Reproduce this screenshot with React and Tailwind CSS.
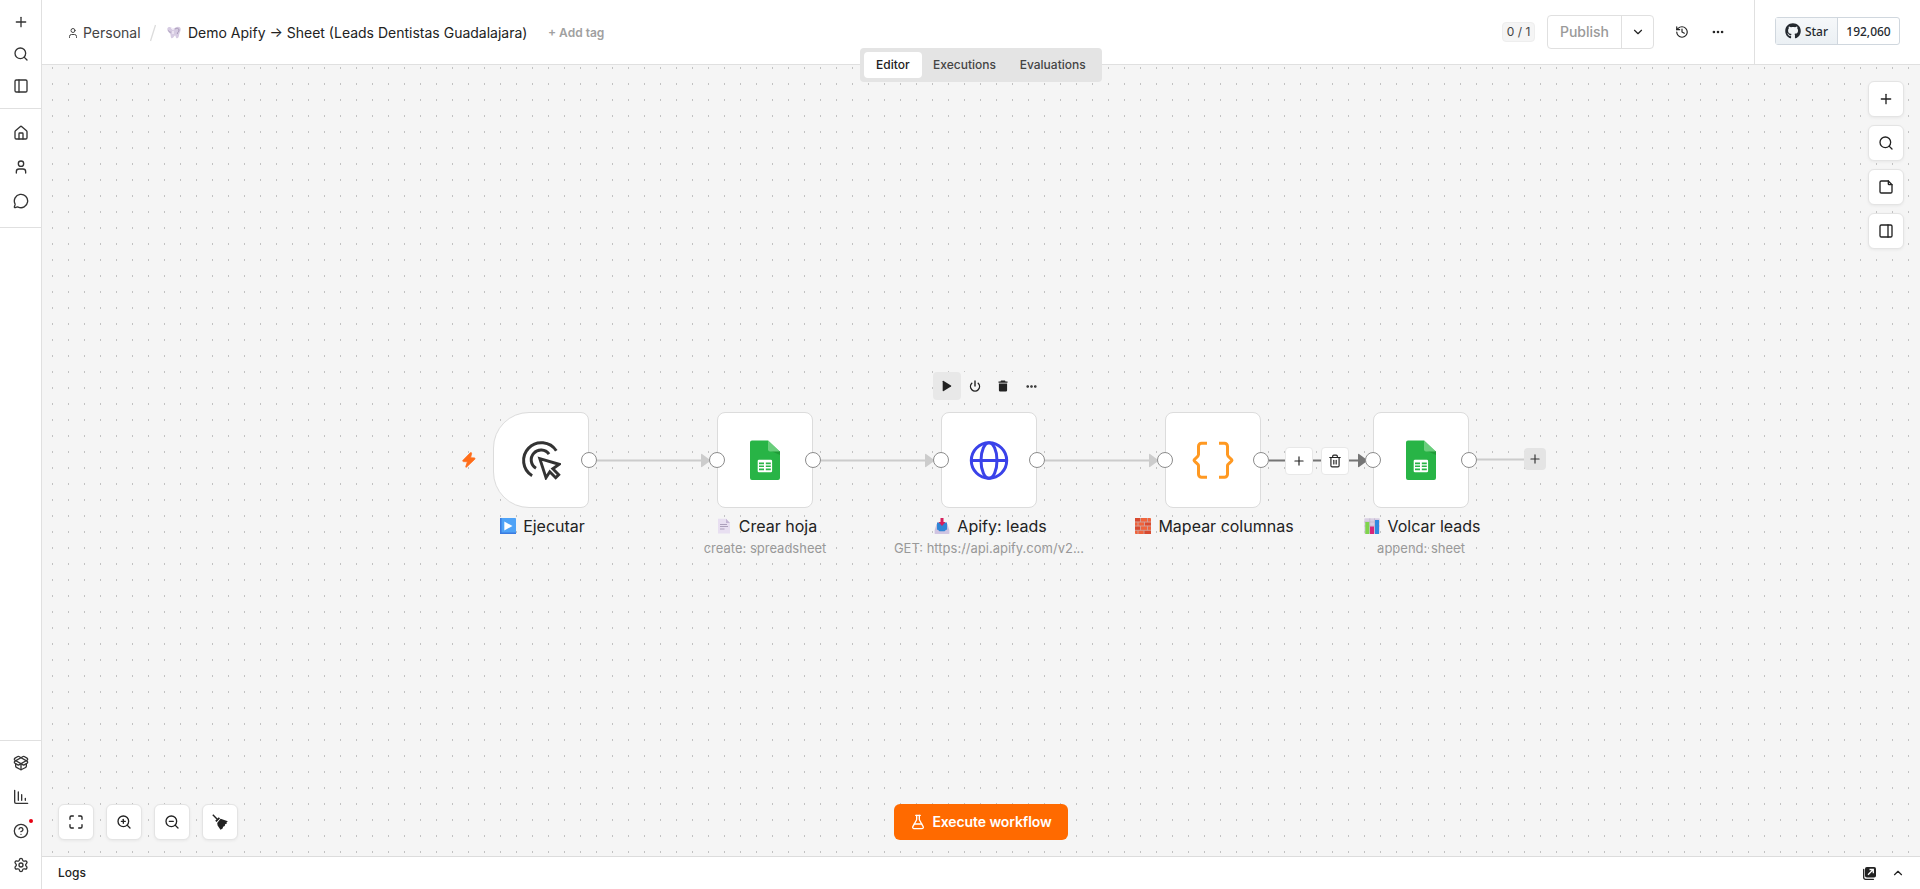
import React from "react";
import {
  Plus, Search, PanelLeft, PanelRight, House, User, MessageCircle, PackageOpen,
  CircleQuestionMark, Settings, History, ChevronDown, ChevronUp, Ellipsis, Maximize,
  ZoomIn, ZoomOut, Trash2, Power, FlaskConical,
} from "lucide-react";
import { FaGithub } from "react-icons/fa";

/* ---------- Icons ---------- */

function InsightsIcon() {
  return (
    <svg width="16" height="16" viewBox="0 0 24 24" fill="none" stroke="currentColor" strokeWidth="2" strokeLinecap="round" strokeLinejoin="round">
      <path d="M2.500 2v17.500a2 2 0 0 0 2 2H22M8 17V4.500M13 17V8.500M18.500 17v-3" />
    </svg>
  );
}

function NoteIcon() {
  return (
    <svg width="16" height="16" viewBox="0 0 24 24" fill="none" stroke="currentColor" strokeWidth="2" strokeLinecap="round" strokeLinejoin="round">
      <path d="M15.500 3H5a2 2 0 0 0-2 2v14a2 2 0 0 0 2 2h14a2 2 0 0 0 2-2V8.500Z" />
      <path d="M15.500 3v4.500a1 1 0 0 0 1 1H21" />
    </svg>
  );
}

function BroomIcon() {
  return (
    <svg width="16" height="16" viewBox="0 0 16 16" fill="#222">
      <path d="M.3 1.300 1.300.3l4.200 4.200 1.300-1.300 1.200 1.200L4.500 8 3.200 6.800l1.300-1.300Z" />
      <path d="M8.600 4.700 15.800 7.300 14.500 8.600l.3 1.200-1.500.3-.6 2-1.600.7-.5 1.700-2.100 1.300-2.900-4.200-.4-2.500Z" />
    </svg>
  );
}

function PopOutIcon() {
  return (
    <svg width="13" height="13" viewBox="0 0 13 13" fill="none">
      <rect x="2" y="0" width="11" height="10.500" rx="1.800" fill="#222" />
      <path d="M.7 2.500V10.500a1.800 1.800 0 0 0 1.800 1.800H10.500" stroke="#222" strokeWidth="1.300" strokeLinecap="round" />
      <path d="M5 7.800 10 2.800M6.500 2.500h3.800v3.800" stroke="#fff" strokeWidth="1.300" />
    </svg>
  );
}

function PointerIcon() {
  return (
    <svg width="40" height="40" viewBox="0 0 40 40" fill="none" stroke="#333" strokeWidth="3">
      <path d="M35.300 10.800A17.800 17.800 0 1 0 11.100 35.700" />
      <path d="M28 14.200A9.800 9.800 0 1 0 15 28.300" />
      <path d="M18.800 18.700 38 24.300 31.800 28.800 37.700 34.700 34.700 37.700 28.800 31.800 25 37.700Z" strokeWidth="2.900" />
    </svg>
  );
}

function SheetsIcon() {
  return (
    <svg width="30" height="40" viewBox="0 0 30 40">
      <path d="M2 .5H18L30 12V38a2 2 0 0 1-2 2H2a2 2 0 0 1-2-2V2.500a2 2 0 0 1 2-2Z" fill="#28b446" />
      <path d="M20 10.500 30 15V11Z" fill="#219b38" />
      <path d="M18 .5 30 11.500H20a2 2 0 0 1-2-2Z" fill="#6ace7c" />
      <rect x="7.700" y="19.800" width="14.400" height="12.500" rx="1.300" fill="#fff" />
      <path d="M9 22.500h5v1.700H9zM15.800 22.500h5v1.700h-5zM9 25.500h5v1.500H9zM15.800 25.500h5v1.500h-5zM9 28.500h5v1.700H9zM15.800 28.500h5v1.700h-5z" fill="#28b446" />
    </svg>
  );
}

function GlobeIcon() {
  return (
    <svg width="40" height="40" viewBox="0 0 40 40" fill="none" stroke="#3a42e9" strokeWidth="3">
      <circle cx="20" cy="20.500" r="17.700" />
      <ellipse cx="20" cy="20.500" rx="8" ry="17.700" />
      <path d="M2.200 20.500h35.600" />
    </svg>
  );
}

function BracesIcon() {
  return (
    <svg width="42" height="38" viewBox="0 0 42 38" fill="none" stroke="#ff9922" strokeWidth="3">
      <path d="M15 2.300H9.500a3 3 0 0 0-3 3v8.500c0 2.200-4.500 4-4.500 5.500s4.500 3.300 4.500 5.500V33.300a3 3 0 0 0 3 3H15" />
      <path d="M27 2.300h5.500a3 3 0 0 1 3 3v8.500c0 2.200 4.500 4 4.500 5.500s-4.500 3.300-4.500 5.500V33.300a3 3 0 0 1-3 3H27" />
    </svg>
  );
}

/* ---------- Label pictograms, 16-unit grid ---------- */

function PlayTile() {
  return (
    <svg width="16" height="16" viewBox="0 0 16 16">
      <rect width="16" height="16" rx=".8" fill="#4fa3f7" />
      <path d="M0 0h1.500v14.500h14.500v1.500H0z" fill="#3a7be0" />
      <path d="M4.300 3.500v9L12.500 8Z" fill="#fff" />
    </svg>
  );
}

function PageTile() {
  return (
    <svg width="16" height="16" viewBox="0 0 16 16">
      <path d="M2 .8h8L14 5v10.500H2Z" fill="#e8dff1" />
      <path d="M10 .8 14 5h-4Z" fill="#c4b6d4" />
      <path d="M4 6.500h7M4 8.500h8M4 11h4.500" stroke="#a598b4" strokeWidth=".9" />
    </svg>
  );
}

function InboxTile() {
  return (
    <svg width="16" height="16" viewBox="0 0 16 16">
      <path d="M2.500 6h11l1.700 6v3.800H.8V12Z" fill="#c9bfdc" />
      <path d="M3 4.500h10v8l-2.500 1h-5L3 12.500Z" fill="#2f86d6" />
      <path d="M.8 11.800H4l1.500 1.700h5l1.500-1.700h3.200v4H.8Z" fill="#cfc4e2" />
      <path d="M6.500 0h3v4h2L8 8 4.500 4h2Z" fill="#d51f5c" />
    </svg>
  );
}

function BrickTile() {
  return (
    <svg width="16" height="16" viewBox="0 0 16 16">
      <rect width="16" height="16" rx=".8" fill="#f0643c" />
      <path d="M0 0h5v3.500H0zM10 4.500h6v3H10zM0 8.500h5V12H0zM9 12.700h7V16H9z" fill="#d84a30" />
      <path d="M0 4h16M0 8h16M0 12.300h16M5.500 0v4M12.500 0v4M3 4v4M9.500 4v4M5.500 8v4.300M12.500 8v4.300M3 12.300V16M9 12.300V16" stroke="#c9a9a8" strokeWidth=".8" />
    </svg>
  );
}

function ChartTile() {
  return (
    <svg width="16" height="16" viewBox="0 0 16 16">
      <rect x=".3" y=".3" width="15.400" height="15.400" rx=".6" fill="#d9cfe3" />
      <path d="M.3 4h15.400M.3 8h15.400M5.800.3v15.400M10.500.3v15.400" stroke="#b8aec6" strokeWidth=".6" />
      <rect x="1.300" y="4" width="4" height="12" fill="#7fd44c" />
      <rect x="6" y="8.500" width="4" height="7.500" fill="#d8267a" />
      <rect x="11" y="2" width="4" height="14" fill="#2f8ae0" />
    </svg>
  );
}

function ToothTile() {
  return (
    <svg width="14" height="14" viewBox="0 0 14 14">
      <path d="M.3 3C.5.800 3 .6 4 1.500l2.500 1.200L9 1.200c1.500-1 4.700-.7 4.700 1.800 0 2.500-1 3-1.400 5-.3 2-.8 4.300-2.300 4.300S9 9.500 8 9.500 6.500 12.300 5 12.300 3.900 9.500 3.300 8 .1 5.500.3 3Z" fill="#d6cbe2" />
      <path d="M1.500 4.500c.3 1.500 2 2 2.700 1.500M8 3C9.500 2 12 2 12 4S10.300 6 10.300 8" fill="none" stroke="#a99bb9" strokeWidth="1" />
      <path d="M4.300 1.700 6.500 3.700M6 5v3" stroke="#f7f2fb" strokeWidth="1.200" />
    </svg>
  );
}

/* ---------- Layout pieces ---------- */

function SideItem({ children, tall, badge }) {
  return (
    <div className={tall ? "relative flex h-[34px] w-full items-center justify-center" : "relative flex h-8 w-full items-center justify-center"}>
      {children}
      {badge && <span className="absolute top-[5px] left-[29px] size-1 rounded-full bg-[#e60012]" />}
    </div>
  );
}

function Sidebar() {
  return (
    <aside className="flex w-[42px] shrink-0 flex-col border-r border-[#e0e0e0] bg-white text-[#333]">
      <div className="flex h-[109px] flex-col border-b border-[#e0e0e0] pt-1.5">
        <SideItem><Plus size={16} /></SideItem>
        <SideItem><Search size={16} /></SideItem>
        <SideItem><PanelLeft size={16} /></SideItem>
      </div>
      <div className="flex h-[119px] flex-col border-b border-[#e0e0e0] pt-[7px]">
        <SideItem tall><House size={16} /></SideItem>
        <SideItem tall><User size={16} /></SideItem>
        <SideItem tall><MessageCircle size={16} /></SideItem>
      </div>
      <div className="mt-auto flex h-[149px] flex-col border-t border-[#e0e0e0] pt-[5px]">
        <SideItem tall><PackageOpen size={16} /></SideItem>
        <SideItem tall><InsightsIcon /></SideItem>
        <SideItem tall badge><CircleQuestionMark size={16} /></SideItem>
        <SideItem tall><Settings size={16} /></SideItem>
      </div>
    </aside>
  );
}

function Header() {
  return (
    <header className="flex h-[65px] shrink-0 items-center border-b border-[#e0e0e0] bg-white pl-[25px]">
      <div className="flex items-center pt-[2px]">
        <User size={12} className="text-[#444]" />
        <span className="ml-[4px] w-[58px] text-sm whitespace-nowrap text-[#444]">Personal</span>
        <svg width="8" height="18" viewBox="0 0 8 18" className="ml-[8px]"><path d="M6.500 1 1.500 17" stroke="#dcdcdc" strokeWidth="1.300" /></svg>
        <span className="ml-[10px]"><ToothTile /></span>
        <span className="ml-[7px] w-[360px] text-sm whitespace-nowrap text-[#222]">Demo Apify → Sheet (Leads Dentistas Guadalajara)</span>
        <span className="text-xs font-semibold whitespace-nowrap text-[#a0a0a0]">+ Add tag</span>
      </div>
      <div className="ml-auto flex h-full items-center">
        <span className="flex h-5 w-[33px] items-center justify-center rounded border border-[#eee] bg-[#f5f5f5] text-xs whitespace-nowrap text-[#444]">0 / 1</span>
        <div className="ml-3 flex h-[34px] w-[107px] rounded border border-[#e0e0e0]">
          <span className="flex w-[74px] items-center justify-center border-r border-[#e0e0e0] text-sm font-medium text-[#9a9a9a]">Publish</span>
          <span className="flex flex-1 items-center justify-center text-[#222]"><ChevronDown size={14} /></span>
        </div>
        <History size={14} className="ml-[21px] text-[#222]" />
        <Ellipsis size={14} className="ml-[22px] text-[#222]" strokeWidth={2.500} />
        <div className="ml-[29px] flex h-full w-[166px] items-center border-l border-[#e0e0e0] pb-[2px] pl-5 font-['Noto_Sans',sans-serif] text-xs font-medium text-[#24292f]">
          <div className="flex h-7 w-[125px] rounded-[3px] border border-[#d0d7de]">
            <span className="flex w-[62px] items-center justify-center gap-1 border-r border-[#d0d7de] bg-gradient-to-b from-[#f6f8fa] to-[#ebf0f4]">
              <FaGithub size={16} />
              <span className="pt-[2px]">Star</span>
            </span>
            <span className="flex flex-1 items-center justify-center pt-[2px]">192,060</span>
          </div>
        </div>
      </div>
    </header>
  );
}

function SquareButton({ children }) {
  return (
    <button className="flex size-9 items-center justify-center rounded-md border border-[#e4e4e4] bg-white text-[#222] shadow-[0_1px_3px_rgba(0,0,0,0.06)]">
      {children}
    </button>
  );
}

function Handle({ side }) {
  return (
    <span className={side === "left"
      ? "absolute top-[39px] -left-[9px] size-4 rounded-full border border-[#8c8c8c] bg-white"
      : "absolute top-[39px] -right-[9px] size-4 rounded-full border border-[#8c8c8c] bg-white"} />
  );
}

function Node({ place, round, icon, tile, title, subtitle, input = true }) {
  return (
    <div className={`absolute top-[347px] flex w-24 flex-col items-center ${place}`}>
      <div className={`relative flex size-24 items-center justify-center border border-[#dcdcdc] bg-white ${round ? "rounded-l-[36px] rounded-r-lg" : "rounded-lg"}`}>
        {icon}
        {input && <Handle side="left" />}
        <Handle side="right" />
      </div>
      <div className="mt-2 flex h-5 items-center gap-1 text-base whitespace-nowrap text-[#222]">
        <span className="mx-[3px]">{tile}</span>
        <span>{title}</span>
      </div>
      {subtitle && <div className="mt-[2px] text-[13px] leading-5 whitespace-nowrap text-[#999]">{subtitle}</div>}
    </div>
  );
}

function Edges() {
  const y = 395.5;
  const arrow = (x) => `M${x - 8} ${y - 6}q0-1 1-.5l7.500 5.500q.8 1 0 2l-7.500 5.500q-1 .5-1-.5Z`;
  return (
    <svg className="absolute inset-0" width="1878" height="791" fill="none">
      {[[555, 667], [779, 891], [1003, 1115]].map(([a, b]) => (
        <g key={a}>
          <path d={`M${a} ${y}H${b - 4}`} stroke="#cccccc" strokeWidth="2" />
          <path d={arrow(b)} fill="#cccccc" />
        </g>
      ))}
      <path d={`M1227 ${y}H1320`} stroke="#757575" strokeWidth="2" />
      <path d={arrow(1324)} fill="#757575" />
      <path d="M1435 394.500H1482" stroke="#cccccc" strokeWidth="2" />
    </svg>
  );
}

function Canvas() {
  return (
    <main className="relative flex-1 overflow-hidden bg-[#f5f5f5]">
      <svg className="absolute inset-0" width="100%" height="100%">
        <defs>
          <pattern id="dots" x="10" y="2" width="16" height="16" patternUnits="userSpaceOnUse">
            <rect width="1" height="2" fill="#c2c2c2" />
          </pattern>
        </defs>
        <rect width="100%" height="100%" fill="url(#dots)" />
      </svg>
      <Edges />

      <svg className="absolute top-[387px] left-[420px]" width="14" height="16" viewBox="0 0 14 16">
        <path d="M8.300.8 1 8.300q-.8 1 .4 1.300l4 .2-1.600 4.700q-.2 1.200.8.500l8.200-7.800q.8-1-.4-1.300L8.600 5.800 9.600 1.400Q9.500.1 8.300.8Z" fill="#ff6d1a" stroke="#ff6d1a" strokeWidth=".8" />
      </svg>

      <Node place="left-[451px]" round input={false} icon={<PointerIcon />} tile={<PlayTile />} title="Ejecutar" />
      <Node place="left-[675px]" icon={<SheetsIcon />} tile={<PageTile />} title="Crear hoja" subtitle="create: spreadsheet" />
      <Node place="left-[899px]" icon={<GlobeIcon />} tile={<InboxTile />} title="Apify: leads" subtitle="GET: https://api.apify.com/v2..." />
      <Node place="left-[1123px]" icon={<BracesIcon />} tile={<BrickTile />} title="Mapear columnas" />
      <Node place="left-[1331px]" icon={<SheetsIcon />} tile={<ChartTile />} title="Volcar leads" subtitle="append: sheet" />

      <div className="absolute top-[307px] left-[891px] flex h-7 bg-[#f5f5f5] text-[#222]">
        <span className="flex size-7 items-center justify-center rounded bg-[#e8e8e8]">
          <svg width="10" height="12" viewBox="0 0 10 12"><path d="M1.300.8 9 5.500q.6.500 0 1L1.300 11.200Q.7 11.400.7 10.800V1.200Q.7.600 1.300.8Z" fill="#222" /></svg>
        </span>
        <span className="flex size-7 items-center justify-center"><Power size={12} strokeWidth={2.800} /></span>
        <span className="flex size-7 items-center justify-center">
          <svg width="10" height="12" viewBox="0 0 10 12" fill="#222"><path d="M3 .5h4l.5 1h2v1.300H.5V1.500h2ZM.9 3.600h8.200V10.200a1.300 1.300 0 0 1-1.300 1.300H2.200A1.300 1.300 0 0 1 .9 10.200Z" /></svg>
        </span>
        <span className="flex size-7 items-center justify-center"><Ellipsis size={13} strokeWidth={2.800} /></span>
      </div>

      <div className="absolute top-[382px] left-[1243px] flex gap-2 text-[#222]">
        <span className="flex size-7 items-center justify-center rounded border border-[#e8e8e8] bg-white"><Plus size={14} /></span>
        <span className="flex size-7 items-center justify-center rounded border border-[#e8e8e8] bg-white"><Trash2 size={14} /></span>
      </div>
      <span className="absolute top-[383px] left-[1482px] flex size-[22px] items-center justify-center rounded bg-[#e4e4e4] text-[#333]">
        <Plus size={14} />
      </span>

      <div className="absolute top-4 right-4 flex flex-col gap-2">
        <SquareButton><Plus size={16} /></SquareButton>
        <SquareButton><Search size={16} /></SquareButton>
        <SquareButton><NoteIcon /></SquareButton>
        <SquareButton><PanelRight size={16} /></SquareButton>
      </div>

      <div className="absolute bottom-4 left-4 flex gap-3">
        <SquareButton><Maximize size={16} /></SquareButton>
        <SquareButton><ZoomIn size={16} /></SquareButton>
        <SquareButton><ZoomOut size={16} /></SquareButton>
        <SquareButton><BroomIcon /></SquareButton>
      </div>

      <button className="absolute bottom-4 left-[852px] flex h-9 w-[174px] items-center justify-center gap-1.5 rounded-md bg-[#ff6a00] text-sm font-semibold tracking-[-0.1px] whitespace-nowrap text-white">
        <FlaskConical size={16} />
        Execute workflow
      </button>
    </main>
  );
}

export default function App() {
  return (
    <div className="relative flex h-[889px] w-[1920px] overflow-hidden bg-white font-['Inter',sans-serif]">
      <Sidebar />
      <div className="flex min-w-0 flex-1 flex-col">
        <Header />
        <Canvas />
        <footer className="flex h-[33px] shrink-0 items-center border-t border-[#dcdcdc] bg-white pr-[15px] pl-4">
          <span className="text-xs font-medium text-[#222]">Logs</span>
          <span className="ml-auto"><PopOutIcon /></span>
          <ChevronUp size={14} className="ml-[15px] text-[#222]" />
        </footer>
      </div>
      <nav className="absolute top-12 left-[860px] flex h-[34px] w-[242px] rounded bg-[#e4e4e4] p-1 text-xs font-medium text-[#444]">
        <span className="flex w-[58px] items-center justify-center rounded bg-white text-[#222]">Editor</span>
        <span className="flex w-[86px] items-center justify-center">Executions</span>
        <span className="flex w-[91px] items-center justify-center">Evaluations</span>
      </nav>
    </div>
  );
}
